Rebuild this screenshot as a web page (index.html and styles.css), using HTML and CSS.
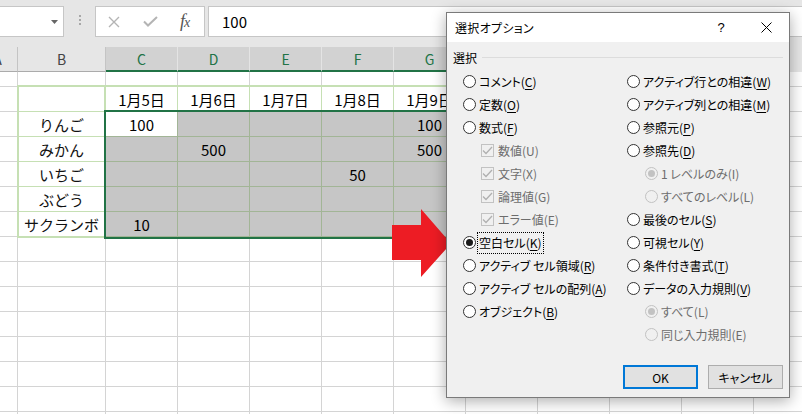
FILE: index.html
```html
<!DOCTYPE html>
<html lang="ja">
<head>
<meta charset="utf-8">
<title>選択オプション</title>
<link rel="stylesheet" href="styles.css">
</head>
<body>
<div class="app">
  <div class="fbar">
    <div class="namebox"><svg width="7" height="4" viewBox="0 0 7 4"><path d="M0 0H7L3.5 4Z" fill="#666"/></svg></div>
    <div class="grip"><i></i><i></i><i></i></div>
    <div class="fbtns">
      <svg class="ic-x" width="12" height="12" viewBox="0 0 12 12"><path d="M1 1L11 11M11 1L1 11" stroke="#b4b4b4" stroke-width="1.4" fill="none"/></svg>
      <svg class="ic-ok" width="15" height="11" viewBox="0 0 15 11"><path d="M1 5.5L5 9.5L14 1" stroke="#b4b4b4" stroke-width="2" fill="none"/></svg>
      <span class="fx">f<span>x</span></span>
    </div>
    <div class="finput">100</div>
  </div>

  <div class="colhead">
    <div class="ch ch-a">A</div>
    <div class="ch ch-b">B</div>
    <div class="ch sel">C</div>
    <div class="ch sel">D</div>
    <div class="ch sel">E</div>
    <div class="ch sel">F</div>
    <div class="ch sel">G</div>
    <div class="ch">H</div>
    <div class="ch">I</div>
    <div class="ch">J</div>
    <div class="ch">K</div>
  </div>

  <div class="sheet">
    <div class="tbl">
      <div class="thead">
        <div class="tcorner"></div>
        <div class="tdate">1月5日</div>
        <div class="tdate">1月6日</div>
        <div class="tdate">1月7日</div>
        <div class="tdate">1月8日</div>
        <div class="tdate">1月9日</div>
      </div>
      <div class="tbody">
        <div class="names">
          <div class="name">りんご</div>
          <div class="name">みかん</div>
          <div class="name">いちご</div>
          <div class="name">ぶどう</div>
          <div class="name">サクランボ</div>
        </div>
        <div class="data">
          <div class="c act">100</div><div class="c"></div><div class="c"></div><div class="c"></div><div class="c">100</div>
          <div class="c"></div><div class="c">500</div><div class="c"></div><div class="c"></div><div class="c">500</div>
          <div class="c"></div><div class="c"></div><div class="c"></div><div class="c">50</div><div class="c"></div>
          <div class="c"></div><div class="c"></div><div class="c"></div><div class="c"></div><div class="c"></div>
          <div class="c">10</div><div class="c"></div><div class="c"></div><div class="c"></div><div class="c"></div>
        </div>
      </div>
    </div>
  </div>

  <svg class="arrow" width="60" height="69" viewBox="0 0 60 69"><path d="M0 16H29V0L59 34.5L29 68V51H0Z" fill="#ed1c24"/></svg>

  <div class="dlg">
    <div class="dlg-title">
      <span class="dlg-name">選択オプション</span>
      <span class="dlg-help">?</span>
      <span class="dlg-close"><svg width="11" height="11" viewBox="0 0 11 11"><path d="M0.5 0.5L10.5 10.5M10.5 0.5L0.5 10.5" stroke="#000" stroke-width="1" fill="none"/></svg></span>
    </div>
    <div class="dlg-body">
      <div class="grp"><span>選択</span><i></i></div>
      <div class="cols">
        <div class="col col-l">
          <div class="opt"><span class="rb"></span><span class="lb">コメント(<u>C</u>)</span></div>
          <div class="opt"><span class="rb"></span><span class="lb">定数(<u>O</u>)</span></div>
          <div class="opt"><span class="rb"></span><span class="lb">数式(<u>F</u>)</span></div>
          <div class="opt sub dis"><span class="cb"><svg width="11" height="9" viewBox="0 0 11 9"><path d="M1 4.5L4 7.5L10 1" stroke="#b0b0b0" stroke-width="1.3" fill="none"/></svg></span><span class="lb">数値(U)</span></div>
          <div class="opt sub dis"><span class="cb"><svg width="11" height="9" viewBox="0 0 11 9"><path d="M1 4.5L4 7.5L10 1" stroke="#b0b0b0" stroke-width="1.3" fill="none"/></svg></span><span class="lb">文字(X)</span></div>
          <div class="opt sub dis"><span class="cb"><svg width="11" height="9" viewBox="0 0 11 9"><path d="M1 4.5L4 7.5L10 1" stroke="#b0b0b0" stroke-width="1.3" fill="none"/></svg></span><span class="lb">論理値(G)</span></div>
          <div class="opt sub dis"><span class="cb"><svg width="11" height="9" viewBox="0 0 11 9"><path d="M1 4.5L4 7.5L10 1" stroke="#b0b0b0" stroke-width="1.3" fill="none"/></svg></span><span class="lb">エラー値(E)</span></div>
          <div class="opt"><span class="rb on"></span><span class="lb focus">空白セル(<u>K</u>)</span></div>
          <div class="opt"><span class="rb"></span><span class="lb">アクティブ セル領域(<u>R</u>)</span></div>
          <div class="opt"><span class="rb"></span><span class="lb">アクティブ セルの配列(<u>A</u>)</span></div>
          <div class="opt"><span class="rb"></span><span class="lb">オブジェクト(<u>B</u>)</span></div>
        </div>
        <div class="col col-r">
          <div class="opt"><span class="rb"></span><span class="lb">アクティブ行との相違(<u>W</u>)</span></div>
          <div class="opt"><span class="rb"></span><span class="lb">アクティブ列との相違(<u>M</u>)</span></div>
          <div class="opt"><span class="rb"></span><span class="lb">参照元(<u>P</u>)</span></div>
          <div class="opt"><span class="rb"></span><span class="lb">参照先(<u>D</u>)</span></div>
          <div class="opt sub dis"><span class="rb on"></span><span class="lb">1 レベルのみ(I)</span></div>
          <div class="opt sub dis"><span class="rb"></span><span class="lb">すべてのレベル(L)</span></div>
          <div class="opt"><span class="rb"></span><span class="lb">最後のセル(<u>S</u>)</span></div>
          <div class="opt"><span class="rb"></span><span class="lb">可視セル(<u>Y</u>)</span></div>
          <div class="opt"><span class="rb"></span><span class="lb">条件付き書式(<u>T</u>)</span></div>
          <div class="opt"><span class="rb"></span><span class="lb">データの入力規則(<u>V</u>)</span></div>
          <div class="opt sub dis"><span class="rb on"></span><span class="lb">すべて(L)</span></div>
          <div class="opt sub dis"><span class="rb"></span><span class="lb">同じ入力規則(E)</span></div>
        </div>
      </div>
      <div class="btns">
        <button class="btn ok" type="button">OK</button>
        <button class="btn" type="button">キャンセル</button>
      </div>
    </div>
  </div>
</div>
</body>
</html>
```

FILE: styles.css
```css
* { box-sizing: border-box; margin: 0; padding: 0; }
html, body { width: 802px; height: 414px; overflow: hidden; }
body {
  font-family: "Noto Sans CJK JP", "Noto Sans", sans-serif;
  background: #fff;
  color: #000;
}
.app { position: relative; width: 802px; height: 414px; overflow: hidden; }

/* formula bar */
.fbar {
  height: 47px;
  background: #e6e6e6;
  display: flex;
  align-items: flex-start;
  padding-top: 6px;
}
.namebox {
  flex: none;
  width: 80px;
  margin-left: -16px;
  height: 31px;
  background: #fff;
  border: 1px solid #c6c6c6;
  display: flex;
  align-items: center;
  justify-content: flex-end;
  padding-right: 5px;
}
.grip {
  flex: none;
  width: 31px;
  display: flex;
  flex-direction: column;
  align-items: center;
  gap: 2px;
  padding-top: 9px;
}
.grip i { display: block; width: 2px; height: 2px; background: #a8a8a8; }
.fbtns {
  flex: none;
  width: 110px;
  height: 31px;
  background: #fff;
  border: 1px solid #c6c6c6;
  display: flex;
  align-items: center;
}
.ic-x { margin-left: 12px; }
.ic-ok { margin-left: 23px; }
.fx {
  margin-left: 22px;
  font-family: "Liberation Serif", serif;
  font-style: italic;
  font-size: 18px;
  color: #555;
  letter-spacing: -1px;
}
.fx span { font-size: 14px; }
.finput {
  flex: none;
  width: 700px;
  margin-left: 3px;
  height: 31px;
  background: #fff;
  border: 1px solid #c6c6c6;
  padding-left: 13px;
  font-size: 15px;
  line-height: 29px;
}

/* column headers */
.colhead { display: flex; height: 25px; background: #e6e6e6; }
.ch {
  flex: none;
  width: 72px;
  height: 25px;
  border-right: 1px solid #c4c4c4;
  border-bottom: 1px solid #ababab;
  display: flex;
  align-items: center;
  justify-content: center;
  font-size: 14px;
  color: #444;
}
.ch-a { width: 40px; margin-left: -22px; }
.ch-b { width: 88px; }
.ch.sel {
  background: #d2d2d2;
  color: #217346;
  border-right-color: #e4e4e4;
  border-bottom: 2px solid #217346;
}

/* sheet body */
.sheet {
  height: 342px;
  padding: 13px 0 0 17px;
  background-color: #fff;
  background-image:
    linear-gradient(#d4d4d4, #d4d4d4),
    repeating-linear-gradient(to right, #d4d4d4 0 1px, transparent 1px 72px),
    repeating-linear-gradient(to bottom, transparent 0 14px, #d4d4d4 14px 15px, transparent 15px 25px);
  background-size: 1px 100%, 700px 100%, 100% 100%;
  background-position: 17px 0, 105px 0, 0 0;
  background-repeat: no-repeat;
}
.tbl {
  display: inline-flex;
  flex-direction: column;
  background: #fff;
  border-style: solid;
  border-color: #c6e0b4;
  border-width: 2px 0 1px 2px;
  font-size: 15px;
}
.thead { display: flex; height: 25px; }
.tcorner {
  width: 87px;
  border-right: 2px solid #c6e0b4;
  border-bottom: 1px solid #c6e0b4;
}
.tdate {
  width: 72px;
  border-right: 1px solid #c6e0b4;
  border-bottom: 1px solid #c6e0b4;
  display: flex;
  align-items: center;
  justify-content: center;
}
.tbody { display: flex; }
.names { width: 87px; }
.name {
  height: 25px;
  border-right: 2px solid #c6e0b4;
  border-bottom: 1px solid #c6e0b4;
  display: flex;
  align-items: center;
  justify-content: center;
  color: #111;
}
.data {
  display: grid;
  grid-template-columns: repeat(5, 72px);
  grid-auto-rows: 25px;
  outline: 2px solid #217346;
}
.c {
  background: #c6c6c6;
  border-right: 1px solid #a2b596;
  border-bottom: 1px solid #a2b596;
  display: flex;
  align-items: center;
  justify-content: center;
}
.c.act { background: #fff; }

/* red arrow (overlay) */
.arrow { position: absolute; left: 392px; top: 209px; }

/* dialog (overlay) */
.dlg {
  position: absolute;
  left: 446px;
  top: 12px;
  width: 344px;
  height: 386px;
  border: 1px solid #7a7a7a;
  background: #f0f0f0;
  box-shadow: 0 3px 14px rgba(0, 0, 0, 0.33);
  display: flex;
  flex-direction: column;
  font-size: 12px;
  font-feature-settings: "palt";
}
.dlg-title {
  height: 29px;
  background: #fff;
  display: flex;
  align-items: center;
  flex: none;
}
.dlg-name { flex: 1; padding-left: 8px; font-size: 12px; letter-spacing: 0.3px; }
.dlg-help { width: 44px; text-align: center; font-size: 13px; font-family: "Liberation Sans", sans-serif; }
.dlg-close { width: 46px; height: 29px; display: flex; align-items: center; justify-content: center; }
.dlg-body {
  flex: 1;
  display: flex;
  flex-direction: column;
  padding: 7px 6px 8px 6px;
}
.grp { display: flex; align-items: center; height: 16px; }
.grp i { flex: 1; height: 1px; background: #dcdcdc; margin-left: 5px; }
.cols { display: flex; margin-top: 5px; padding-left: 10px; }
.col-l { width: 164px; }
.opt { height: 23px; display: flex; align-items: center; white-space: nowrap; }
.opt.sub { padding-left: 18px; }
.lb { margin-left: 3px; line-height: 18px; }
.lb u { text-decoration-thickness: 1px; text-underline-offset: 2px; }
.focus { outline: 1px dotted #000; padding: 0 1px; margin-left: 2px; height: 20px; line-height: 20px; }
.rb {
  flex: none;
  width: 13px;
  height: 13px;
  border: 1px solid #333;
  border-radius: 50%;
  background: #fff;
  display: flex;
  align-items: center;
  justify-content: center;
}
.rb.on::after { content: ""; width: 7px; height: 7px; border-radius: 50%; background: #1a1a1a; }
.dis { color: #6d6d6d; }
.dis .rb { border-color: #c2c2c2; background: #f0f0f0; }
.dis .rb.on::after { background: #c2c2c2; }
.cb {
  flex: none;
  width: 13px;
  height: 13px;
  border: 1px solid #c2c2c2;
  background: #f0f0f0;
  display: flex;
  align-items: center;
  justify-content: center;
}
.sub .cb + .lb { margin-left: 4px; }
.btns { margin-top: auto; display: flex; justify-content: flex-end; gap: 10px; }
.btn {
  width: 75px;
  height: 24px;
  font: inherit;
  font-size: 12px;
  font-feature-settings: "palt";
  color: #000;
  background: #e1e1e1;
  border: 1px solid #adadad;
}
.btn.ok { border: 2px solid #0078d7; }
```
